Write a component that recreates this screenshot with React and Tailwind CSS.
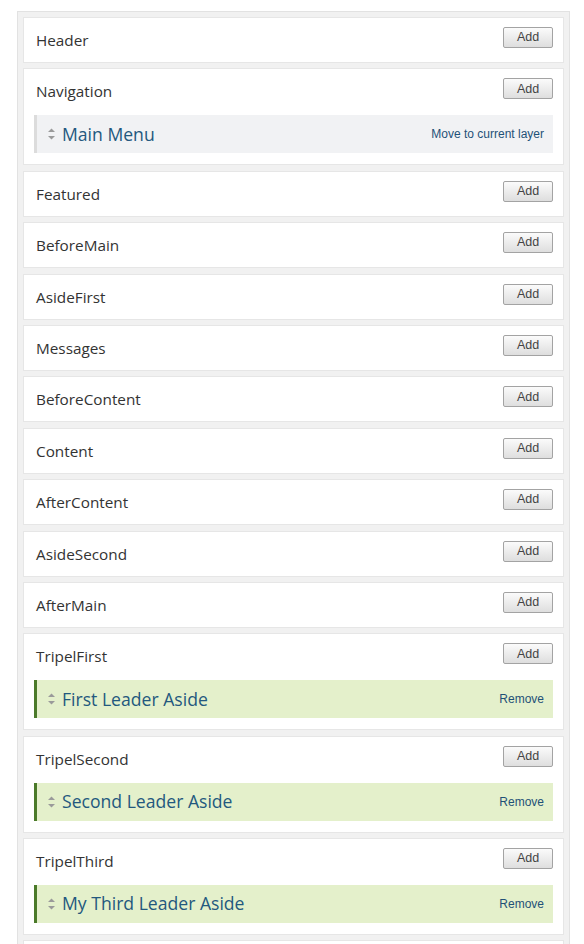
import React from "react";

const Arrows = () => (
  <svg width="9" height="12" viewBox="0 0 9 12" className="shrink-0">
    <path d="M4.5 0.5 L8 4 L1 4 Z" fill="#9a9a9a" />
    <path d="M4.5 11.5 L8 8 L1 8 Z" fill="#9a9a9a" />
  </svg>
);

const AddButton = () => (
  <button className="h-[21px] w-[50px] shrink-0 rounded-[2px] border border-[#a3a3a3] bg-gradient-to-b from-[#fbfbfb] to-[#dedede] text-[12.5px] leading-none text-[#444] [font-family:'Liberation_Sans',Arial,sans-serif]">
    Add
  </button>
);

const Block = ({ title, action, green }) => (
  <div
    className={
      "mt-[11px] flex h-[38px] items-center border-l-[3px] pl-[10px] pr-[9px] " +
      (green ? "border-[#4b7a2a] bg-[#e4f0cb]" : "border-[#dcdcdc] bg-[#f1f2f4]")
    }
  >
    <Arrows />
    <span className="ml-[6px] flex-1 text-[17.6px] leading-none text-[#23587e] [font-family:'Open_Sans',sans-serif]">
      {title}
    </span>
    <span className="text-[12px] leading-none text-[#1f5177] [font-family:'Liberation_Sans',Arial,sans-serif]">
      {action}
    </span>
  </div>
);

const Card = ({ label, block }) => (
  <div
    className={
      "border border-[#e6e6e6] bg-white px-[10px] pt-[9px] " +
      (block ? "pb-[11px]" : "pb-[9px]")
    }
  >
    <div className="flex h-[26px] items-start justify-between">
      <span className="pl-[2px] text-[15.3px] leading-[26px] text-[#333] [font-family:'Open_Sans',sans-serif]">
        {label}
      </span>
      <AddButton />
    </div>
    {block && <Block {...block} />}
  </div>
);

const rows = [
  { label: "Header" },
  { label: "Navigation", block: { title: "Main Menu", action: "Move to current layer" } },
  { label: "Featured" },
  { label: "BeforeMain" },
  { label: "AsideFirst" },
  { label: "Messages" },
  { label: "BeforeContent" },
  { label: "Content" },
  { label: "AfterContent" },
  { label: "AsideSecond" },
  { label: "AfterMain" },
  { label: "TripelFirst", block: { title: "First Leader Aside", action: "Remove", green: true } },
  { label: "TripelSecond", block: { title: "Second Leader Aside", action: "Remove", green: true } },
  { label: "TripelThird", block: { title: "My Third Leader Aside", action: "Remove", green: true } },
  { label: "" },
];

export default function App() {
  return (
    <div className="h-[944px] overflow-hidden bg-white pl-[17px] pt-[11px]">
      <div className="flex w-[553px] flex-col gap-[5.4px] border border-[#e2e2e2] bg-[#f1f1f1] p-[5px]">
        {rows.map((r, i) => (
          <Card key={i} {...r} />
        ))}
      </div>
    </div>
  );
}
